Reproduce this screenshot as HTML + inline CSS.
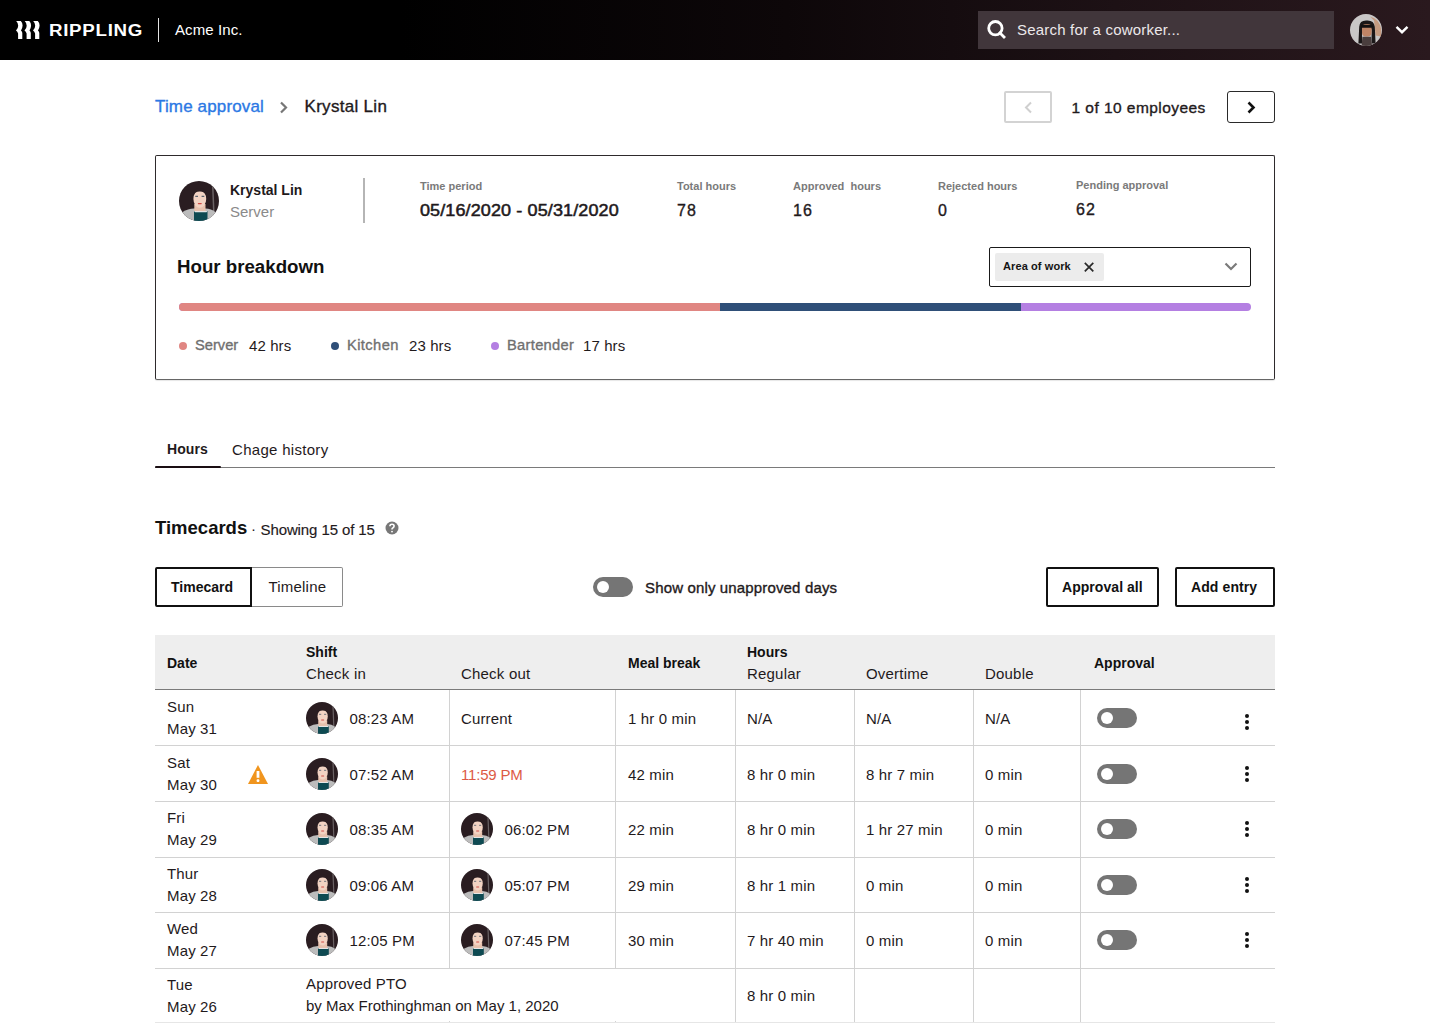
<!DOCTYPE html>
<html><head><meta charset="utf-8">
<style>
*{box-sizing:border-box;margin:0;padding:0}
html,body{width:1430px;height:1023px;overflow:hidden;background:#fff;font-family:"Liberation Sans",sans-serif;color:#1f1a1c}
.a{position:absolute}
.t{position:absolute;white-space:nowrap;line-height:1}
.md{-webkit-text-stroke:0.35px currentColor}
#hdr{position:absolute;left:0;top:0;width:1430px;height:60px;background:linear-gradient(90deg,#000 0%,#000 28%,#0d0709 55%,#1d1115 78%,#2a191e 100%)}
.av{position:absolute;width:32px;height:32px}
.vl{position:absolute;width:1px;background:#d2d2d2}
.hl{position:absolute;height:1px;background:#d2d2d2;left:155px;width:1120px}
.tg{position:absolute;width:40px;height:20px;border-radius:10px;background:#757575}
.tg:after{content:"";position:absolute;left:4px;top:4px;width:12px;height:12px;border-radius:6px;background:#fff}
.kb{position:absolute;width:4px;height:16px}
.c{font-size:15px;color:#1f1a1c;letter-spacing:0.15px}
.kb i{position:absolute;left:0;width:4px;height:4px;border-radius:2px;background:#111}
</style></head><body>
<svg width="0" height="0" style="position:absolute">
 <defs>
  <clipPath id="cc"><circle cx="20" cy="20" r="20"/></clipPath>
  <symbol id="kl" viewBox="0 0 40 40">
   <g clip-path="url(#cc)">
    <rect width="40" height="40" fill="#2a1d21"/>
    <path d="M33 5 L34.5 5 L35.5 30 L34 30Z" fill="#6a6264"/>
    <path d="M1 40 L3.5 31 Q9 27.5 15 27.5 L26.5 27.5 Q32 27.5 36.5 31 L39 40Z" fill="#bcbcbc"/>
    <rect x="15" y="30" width="13.5" height="10" fill="#0e4a52"/>
    <path d="M15 30 H28.5 L27.5 31.3 H16Z" fill="#e6e6e6"/>
    <rect x="15.3" y="23" width="11.2" height="7" fill="#e7c1ad"/>
    <ellipse cx="20.8" cy="18" rx="6.4" ry="8.8" fill="#f2d3c3"/>
    <path d="M13.8 14.5 Q14 6.8 20.8 7 Q27.6 7 27.8 14.5 Q25 10.2 20.5 10.5 Q16 10.5 13.8 14.5Z" fill="#2a1d21"/>
    <path d="M16.3 15.4 H19 M22.6 15.4 H25.3" stroke="#5b6570" stroke-width="1.1"/>
    <rect x="18.8" y="22" width="4" height="1.2" rx="0.6" fill="#d04a44"/>
   </g>
  </symbol>
  <symbol id="me" viewBox="0 0 40 40">
   <g clip-path="url(#cc)">
    <rect width="40" height="40" fill="#c9c7c7"/>
    <path d="M25 3 Q37 6 39 19 L39 28 L32 27 L30 8Z" fill="#c4906f" opacity="0.8"/>
    <path d="M10.5 37 L11.5 16 Q12 7.5 21 8 Q30 7.5 31 16 L32 37 L27 37 L27 19 L15 19 L15 37Z" fill="#1b1718"/>
    <rect x="15" y="12.5" width="12" height="15.5" rx="5" fill="#c08466"/>
    <rect x="13.5" y="13.5" width="15" height="3.6" rx="1.5" fill="#141112"/>
    <path d="M14.5 40 L15.5 28.5 L26.5 28.5 L27.5 40Z" fill="#4a3e3e"/>
   </g>
  </symbol>
 </defs>
</svg>

<div id="hdr">
  <svg class="a" style="left:16px;top:21px" width="25" height="18" viewBox="0 0 25 18">
    <g fill="#fff">
     <path id="lg" d="M0.2 0 H4.8 Q6.8 2 6.6 4.5 Q6.4 7.5 5 9.5 Q6.3 10.5 6.3 12 V18 H2.1 V12.5 Q1.5 10.5 0 9.5 Q2.2 7.5 2.2 4.8 Q2.2 2 0.2 0Z"/>
     <use href="#lg" x="8.5"/>
     <use href="#lg" x="17"/>
    </g>
  </svg>
  <div class="t" style="left:49px;top:23px;color:#fff;font-weight:bold;font-size:16px;letter-spacing:0.6px;transform:scaleX(1.17);transform-origin:0 0;">RIPPLING</div>
  <div class="a" style="left:158px;top:18px;width:1px;height:24px;background:#e5e5e5"></div>
  <div class="t" style="left:175px;top:22px;color:#fff;font-size:15px;letter-spacing:0.1px">Acme Inc.</div>
  <div class="a" style="left:978px;top:11px;width:356px;height:38px;background:#41363b;"></div>
  <svg class="a" style="left:987px;top:20px" width="19" height="19" viewBox="0 0 19 19"><circle cx="8.4" cy="8.2" r="6.7" fill="none" stroke="#fff" stroke-width="2.8"/><path d="M13 13 L17 17" stroke="#fff" stroke-width="2.8" stroke-linecap="square"/></svg>
  <div class="t" style="left:1017px;top:22px;color:#ece8ea;font-size:15px;letter-spacing:0.2px">Search for a coworker...</div>
  <svg class="av" style="left:1350px;top:14px" viewBox="0 0 40 40"><use href="#me"/></svg>
  <svg class="a" style="left:1395px;top:25px" width="14" height="10" viewBox="0 0 14 10"><path d="M1.5 1.8 L7 7.2 L12.5 1.8" fill="none" stroke="#fff" stroke-width="2.4"/></svg>
</div>

<!-- breadcrumb -->
<div class="t md" style="left:155px;top:97.5px;color:#2b78e4;font-size:17px;letter-spacing:0.15px">Time approval</div>
<svg class="a" style="left:278px;top:100px" width="12" height="15" viewBox="0 0 12 15"><path d="M3 2.5 L8 7.5 L3 12.5" fill="none" stroke="#777" stroke-width="2.2"/></svg>
<div class="t md" style="left:304.5px;top:97.5px;font-size:17px;letter-spacing:0.3px">Krystal Lin</div>

<div class="a" style="left:1004px;top:91px;width:48px;height:32px;border:2px solid #d3d3d3;border-radius:2px"></div>
<svg class="a" style="left:1022px;top:100px" width="12" height="15" viewBox="0 0 12 15"><path d="M9 2.5 L4 7.5 L9 12.5" fill="none" stroke="#cfcfcf" stroke-width="2"/></svg>
<div class="t md" style="left:1071.5px;top:100px;font-size:15.5px;letter-spacing:0.45px">1 of 10 employees</div>
<div class="a" style="left:1227px;top:91px;width:48px;height:32px;border:1px solid #2a2a2a;border-radius:3px"></div>
<svg class="a" style="left:1245px;top:100px" width="12" height="15" viewBox="0 0 12 15"><path d="M3.5 2.5 L8.5 7.5 L3.5 12.5" fill="none" stroke="#111" stroke-width="2.6"/></svg>

<!-- card -->
<div class="a" style="left:155px;top:155px;width:1120px;height:225px;border:1px solid #2e2a2c;border-bottom-color:#666;border-radius:2px;box-shadow:0 1px 1px rgba(0,0,0,0.1)"></div>
<svg class="a" style="left:179px;top:181px" width="40" height="40" viewBox="0 0 40 40"><use href="#kl"/></svg>
<div class="t" style="left:230px;top:182.5px;font-size:14px;font-weight:bold;">Krystal Lin</div>
<div class="t" style="left:230px;top:204px;font-size:15px;color:#8a8a8a">Server</div>
<div class="a" style="left:363px;top:178px;width:2px;height:45px;background:#b5b5b5"></div>

<div class="t" style="left:420px;top:180.5px;font-size:11px;font-weight:bold;color:#7a7a7a">Time period</div>
<div class="t" style="left:420px;top:202.5px;font-size:16px;letter-spacing:0.1px;transform:scaleX(1.125);transform-origin:0 0;-webkit-text-stroke:0.5px #1f1a1c">05/16/2020 - 05/31/2020</div>
<div class="t" style="left:677px;top:180.5px;font-size:11px;font-weight:bold;color:#7a7a7a">Total hours</div>
<div class="t md" style="left:677px;top:202.5px;font-size:16px;letter-spacing:1px">78</div>
<div class="t" style="left:793px;top:180.5px;font-size:11px;font-weight:bold;color:#7a7a7a">Approved&nbsp; hours</div>
<div class="t md" style="left:793px;top:202.5px;font-size:16px;letter-spacing:1px">16</div>
<div class="t" style="left:938px;top:180.5px;font-size:11px;font-weight:bold;color:#7a7a7a">Rejected hours</div>
<div class="t md" style="left:938px;top:202.5px;font-size:16px;letter-spacing:1px">0</div>
<div class="t" style="left:1076px;top:179.5px;font-size:11px;font-weight:bold;color:#7a7a7a">Pending approval</div>
<div class="t md" style="left:1076px;top:201.5px;font-size:16px;letter-spacing:1px">62</div>

<div class="t" style="left:177px;top:258px;font-size:18.7px;font-weight:bold;color:#111">Hour breakdown</div>
<div class="a" style="left:989px;top:247px;width:262px;height:40px;border:1.5px solid #1a1a1a;border-radius:2px"></div>
<div class="a" style="left:995px;top:253px;width:109px;height:28px;background:#ececec;border-radius:2px"></div>
<div class="t" style="left:1003px;top:261.3px;font-size:11px;font-weight:bold;color:#151515;letter-spacing:0.1px">Area of work</div>
<svg class="a" style="left:1082.5px;top:261px" width="12" height="12" viewBox="0 0 12 12"><path d="M1.8 1.8 L10.3 10.3 M10.3 1.8 L1.8 10.3" stroke="#2a2a2a" stroke-width="1.7"/></svg>
<svg class="a" style="left:1224px;top:261px" width="14" height="11" viewBox="0 0 14 11"><path d="M1.5 2.5 L7 8 L12.5 2.5" fill="none" stroke="#7a7a7a" stroke-width="2.2"/></svg>

<div class="a" style="left:179px;top:303px;width:1072px;height:8px;border-radius:4px;overflow:hidden;background:#b47fe2">
  <div class="a" style="left:0;top:0;width:541px;height:8px;background:#e08682"></div>
  <div class="a" style="left:541px;top:0;width:301px;height:8px;background:#2f4f78"></div>
</div>

<div class="a" style="left:179px;top:342px;width:8px;height:8px;border-radius:4px;background:#e08682"></div>
<div class="t md" style="left:195px;top:337.5px;font-size:14.7px;color:#707070">Server</div>
<div class="t" style="left:249px;top:337.5px;font-size:15px;letter-spacing:0.1px">42 hrs</div>
<div class="a" style="left:331px;top:342px;width:8px;height:8px;border-radius:4px;background:#2f4f78"></div>
<div class="t md" style="left:347px;top:337.5px;font-size:14.7px;color:#707070;letter-spacing:0.4px">Kitchen</div>
<div class="t" style="left:409px;top:337.5px;font-size:15px;letter-spacing:0.1px">23 hrs</div>
<div class="a" style="left:491px;top:342px;width:8px;height:8px;border-radius:4px;background:#b47fe2"></div>
<div class="t md" style="left:507px;top:337.5px;font-size:14.7px;color:#707070;letter-spacing:0.3px">Bartender</div>
<div class="t" style="left:583px;top:337.5px;font-size:15px;letter-spacing:0.1px">17 hrs</div>

<!-- tabs -->
<div class="t" style="left:167px;top:441.5px;font-size:14px;font-weight:bold;letter-spacing:0.1px">Hours</div>
<div class="t" style="left:232px;top:441.5px;font-size:15px;letter-spacing:0.3px">Chage history</div>
<div class="a" style="left:155px;top:467px;width:1120px;height:1px;background:#7a7a7a"></div>
<div class="a" style="left:155px;top:466px;width:66px;height:2px;background:#1a0e13;border-radius:1px"></div>

<!-- timecards -->
<div class="t" style="left:155px;top:518.5px;font-size:18.5px;font-weight:bold;color:#111">Timecards</div>
<div class="t" style="left:251px;top:521px;font-size:15px;">·</div>
<div class="t" style="left:260.5px;top:521.5px;font-size:15px;letter-spacing:-0.1px;-webkit-text-stroke:0.15px #1f1a1c">Showing 15 of 15</div>
<svg class="a" style="left:384.5px;top:520.5px" width="14" height="14" viewBox="0 0 14 14"><circle cx="7" cy="7" r="6.5" fill="#777"/><path d="M4.9 5.3 Q4.9 3.2 7 3.2 Q9.1 3.2 9.1 5.1 Q9.1 6.3 7.8 6.9 Q7 7.3 7 8.4" fill="none" stroke="#fff" stroke-width="1.6"/><circle cx="7" cy="10.6" r="0.95" fill="#fff"/></svg>

<div class="a" style="left:155px;top:567px;width:97px;height:40px;border:2px solid #111;border-radius:2px 0 0 2px;z-index:2"></div>
<div class="a" style="left:251px;top:567px;width:92px;height:40px;border:1px solid #8a8a8a;border-left:none;border-radius:0 2px 2px 0"></div>
<div class="t" style="left:171px;top:579.5px;font-size:14px;font-weight:bold;color:#111">Timecard</div>
<div class="t" style="left:268.5px;top:578.7px;font-size:15px;letter-spacing:0.2px">Timeline</div>

<div class="tg" style="left:593px;top:577px"></div>
<div class="t md" style="left:645px;top:579.5px;font-size:15px;letter-spacing:0.15px">Show only unapproved days</div>

<div class="a" style="left:1046px;top:567px;width:113px;height:40px;border:2px solid #111;border-radius:2px"></div>
<div class="t" style="left:1062px;top:579.5px;font-size:14px;font-weight:bold;color:#111;letter-spacing:0.05px">Approval all</div>
<div class="a" style="left:1175px;top:567px;width:100px;height:40px;border:2px solid #111;border-radius:2px"></div>
<div class="t" style="left:1191px;top:579.5px;font-size:14px;font-weight:bold;color:#111;letter-spacing:0.1px">Add entry</div>

<!-- table -->
<div class="a" style="left:155px;top:635px;width:1120px;height:55px;background:#eeeeee;border-bottom:1px solid #7a7a7a"></div>
<div class="t" style="left:167px;top:655.5px;font-size:14px;font-weight:bold;color:#111">Date</div>
<div class="t" style="left:306px;top:644.5px;font-size:14px;font-weight:bold;color:#111">Shift</div>
<div class="t" style="left:306px;top:666px;font-size:15px;letter-spacing:0.2px">Check in</div>
<div class="t" style="left:461px;top:666px;font-size:15px;letter-spacing:0.2px">Check out</div>
<div class="t" style="left:628px;top:655.5px;font-size:14px;font-weight:bold;color:#111">Meal break</div>
<div class="t" style="left:747px;top:644.5px;font-size:14px;font-weight:bold;color:#111">Hours</div>
<div class="t" style="left:747px;top:666px;font-size:15px;letter-spacing:0.2px">Regular</div>
<div class="t" style="left:866px;top:666px;font-size:15px;letter-spacing:0.2px">Overtime</div>
<div class="t" style="left:985px;top:666px;font-size:15px;letter-spacing:0.2px">Double</div>
<div class="t" style="left:1094px;top:655.5px;font-size:14px;font-weight:bold;color:#111">Approval</div>

<div id="rows">
<div class="t c" style="left:167px;top:699.3px;">Sun</div>
<div class="t c" style="left:167px;top:721.3px;">May 31</div>
<svg class="av" style="left:306px;top:702px" viewBox="0 0 40 40"><use href="#kl"/></svg>
<div class="t c" style="left:349.5px;top:710.7px;">08:23 AM</div>
<div class="t c" style="left:461px;top:710.7px;">Current</div>
<div class="t c" style="left:628px;top:710.7px;">1 hr 0 min</div>
<div class="t c" style="left:747px;top:710.7px;">N/A</div>
<div class="t c" style="left:866px;top:710.7px;">N/A</div>
<div class="t c" style="left:985px;top:710.7px;">N/A</div>
<div class="tg" style="left:1097px;top:708px"></div>
<div class="kb" style="left:1245px;top:714px"><i style="top:0"></i><i style="top:6px"></i><i style="top:12px"></i></div>
<div class="t c" style="left:167px;top:755.3px;">Sat</div>
<div class="t c" style="left:167px;top:777.3px;">May 30</div>
<svg class="a" style="left:248px;top:765px" width="20" height="19" viewBox="0 0 20 19"><path d="M10 0 L20 19 L0 19Z" fill="#f0951e"/><rect x="8.6" y="6" width="2.8" height="6.8" fill="#fff"/><rect x="8.6" y="14.2" width="2.8" height="2.8" rx="1" fill="#fff"/></svg>
<svg class="av" style="left:306px;top:758px" viewBox="0 0 40 40"><use href="#kl"/></svg>
<div class="t c" style="left:349.5px;top:766.7px;">07:52 AM</div>
<div class="t c" style="left:461px;top:766.7px;color:#dc5a45;letter-spacing:-0.2px">11:59 PM</div>
<div class="t c" style="left:628px;top:766.7px;">42 min</div>
<div class="t c" style="left:747px;top:766.7px;">8 hr 0 min</div>
<div class="t c" style="left:866px;top:766.7px;">8 hr 7 min</div>
<div class="t c" style="left:985px;top:766.7px;">0 min</div>
<div class="tg" style="left:1097px;top:764px"></div>
<div class="kb" style="left:1245px;top:766px"><i style="top:0"></i><i style="top:6px"></i><i style="top:12px"></i></div>
<div class="t c" style="left:167px;top:810.3px;">Fri</div>
<div class="t c" style="left:167px;top:832.3px;">May 29</div>
<svg class="av" style="left:306px;top:813px" viewBox="0 0 40 40"><use href="#kl"/></svg>
<div class="t c" style="left:349.5px;top:821.7px;">08:35 AM</div>
<svg class="av" style="left:461px;top:813px" viewBox="0 0 40 40"><use href="#kl"/></svg>
<div class="t c" style="left:504.5px;top:821.7px;">06:02 PM</div>
<div class="t c" style="left:628px;top:821.7px;">22 min</div>
<div class="t c" style="left:747px;top:821.7px;">8 hr 0 min</div>
<div class="t c" style="left:866px;top:821.7px;">1 hr 27 min</div>
<div class="t c" style="left:985px;top:821.7px;">0 min</div>
<div class="tg" style="left:1097px;top:819px"></div>
<div class="kb" style="left:1245px;top:821px"><i style="top:0"></i><i style="top:6px"></i><i style="top:12px"></i></div>
<div class="t c" style="left:167px;top:866.3px;">Thur</div>
<div class="t c" style="left:167px;top:888.3px;">May 28</div>
<svg class="av" style="left:306px;top:869px" viewBox="0 0 40 40"><use href="#kl"/></svg>
<div class="t c" style="left:349.5px;top:877.7px;">09:06 AM</div>
<svg class="av" style="left:461px;top:869px" viewBox="0 0 40 40"><use href="#kl"/></svg>
<div class="t c" style="left:504.5px;top:877.7px;">05:07 PM</div>
<div class="t c" style="left:628px;top:877.7px;">29 min</div>
<div class="t c" style="left:747px;top:877.7px;">8 hr 1 min</div>
<div class="t c" style="left:866px;top:877.7px;">0 min</div>
<div class="t c" style="left:985px;top:877.7px;">0 min</div>
<div class="tg" style="left:1097px;top:875px"></div>
<div class="kb" style="left:1245px;top:877px"><i style="top:0"></i><i style="top:6px"></i><i style="top:12px"></i></div>
<div class="t c" style="left:167px;top:921.3px;">Wed</div>
<div class="t c" style="left:167px;top:943.3px;">May 27</div>
<svg class="av" style="left:306px;top:924px" viewBox="0 0 40 40"><use href="#kl"/></svg>
<div class="t c" style="left:349.5px;top:932.7px;">12:05 PM</div>
<svg class="av" style="left:461px;top:924px" viewBox="0 0 40 40"><use href="#kl"/></svg>
<div class="t c" style="left:504.5px;top:932.7px;">07:45 PM</div>
<div class="t c" style="left:628px;top:932.7px;">30 min</div>
<div class="t c" style="left:747px;top:932.7px;">7 hr 40 min</div>
<div class="t c" style="left:866px;top:932.7px;">0 min</div>
<div class="t c" style="left:985px;top:932.7px;">0 min</div>
<div class="tg" style="left:1097px;top:930px"></div>
<div class="kb" style="left:1245px;top:932px"><i style="top:0"></i><i style="top:6px"></i><i style="top:12px"></i></div>
<div class="t c" style="left:167px;top:977.3px;">Tue</div>
<div class="t c" style="left:167px;top:999.3px;">May 26</div>
<div class="t c" style="left:306px;top:975.7px;">Approved PTO</div>
<div class="t c" style="left:306px;top:997.6px;letter-spacing:0">by Max Frothinghman on May 1, 2020</div>
<div class="t c" style="left:747px;top:988.2px;">8 hr 0 min</div>
<div class="hl" style="top:745px"></div>
<div class="hl" style="top:801px"></div>
<div class="hl" style="top:857px"></div>
<div class="hl" style="top:912px"></div>
<div class="hl" style="top:968px"></div>
<div class="vl" style="left:449px;top:690px;height:278px"></div>
<div class="vl" style="left:449px;top:1021px;height:2px"></div>
<div class="vl" style="left:615px;top:690px;height:278px"></div>
<div class="vl" style="left:615px;top:1021px;height:2px"></div>
<div class="vl" style="left:735px;top:690px;height:333px"></div>
<div class="vl" style="left:854px;top:690px;height:333px"></div>
<div class="vl" style="left:973px;top:690px;height:333px"></div>
<div class="vl" style="left:1080px;top:690px;height:333px"></div>
<div class="hl" style="top:1022px;background:#e6e6e6"></div>
</div><!--/rows-->
</body></html>
